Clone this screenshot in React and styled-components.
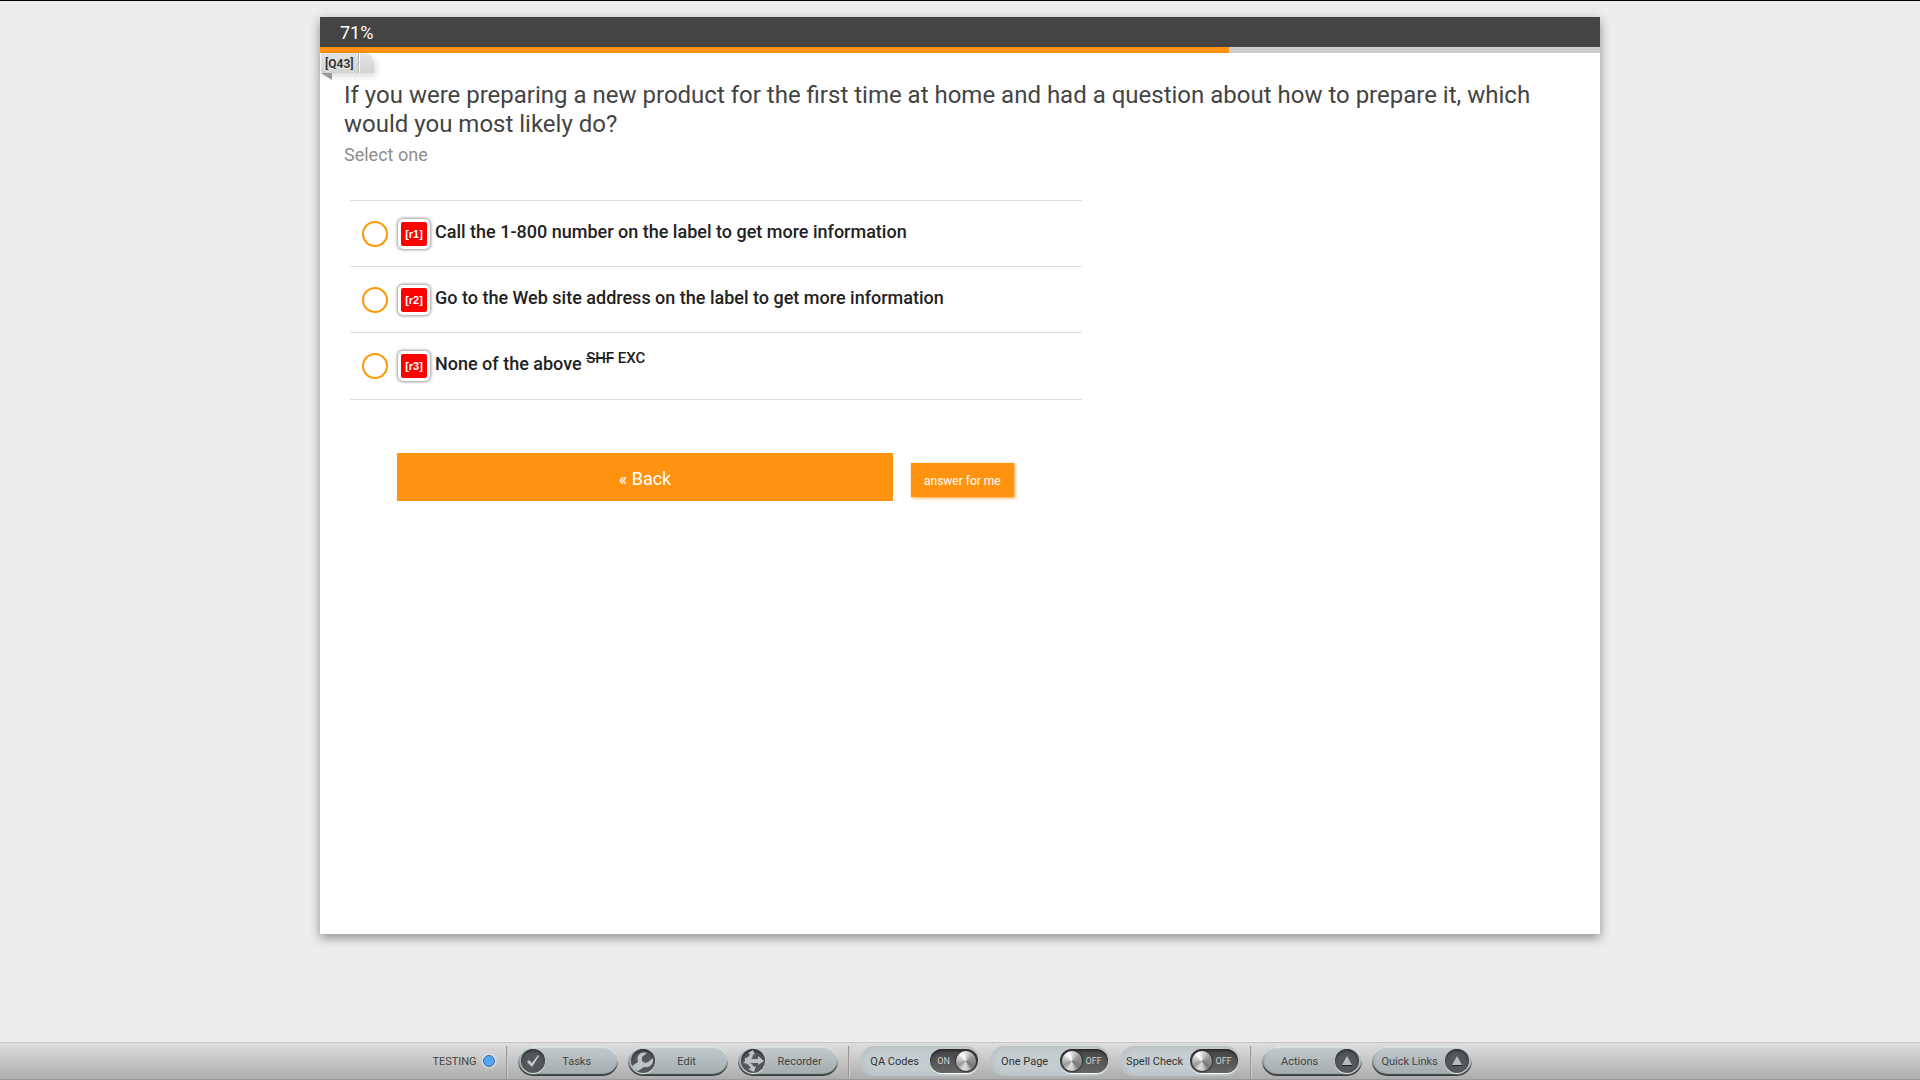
import React from "react";
import styled, { createGlobalStyle, css } from "styled-components";

// GLOBAL
const GlobalStyle = createGlobalStyle`
  * {
    box-sizing: border-box;
  }
  body {
    margin: 0;
    background: #ededed;
    color: #444;
    font-family: Roboto, "Liberation Sans", sans-serif;
  }
  button {
    font-family: inherit;
    cursor: pointer;
  }
`;

// PAGE
const Page = styled.div`
  display: flex;
  flex-direction: column;
  justify-content: space-between;
  align-items: center;
  min-height: 100vh;
  border-top: 1px solid #000;
`;
const Survey = styled.main`
  width: 100%;
  max-width: 1280px;
  min-height: calc(100vh - 163px);
  margin: 16px 0 32px;
  background: #fff;
  box-shadow: 0 4px 10px rgba(0, 0, 0, 0.4);
`;

// PROGRESS
const ProgressHeader = styled.header`
  height: 30px;
  padding-left: 20px;
  background: #444;
  color: #fff;
  font-size: 18px;
  line-height: 32px;
`;
const ProgressTrack = styled.div`
  height: 6px;
  background: #ccc;
`;
const ProgressFill = styled.div`
  height: 100%;
  background: #ff930f;
`;

// QUESTION
const Tag = styled.div`
  position: absolute;
  top: 0;
  left: 1px;
  display: flex;
  height: 20px;
  border-radius: 0 10px 0 0;
  background: linear-gradient(#e2e4e4, #d2d4d4);
  box-shadow: 2px 3px 6px rgba(0, 0, 0, 0.15);
  color: #333;
  font-size: 12px;
  font-weight: 700;
  line-height: 22px;
  text-shadow: 0 1px 0 #fff;

  &::after {
    content: "";
    position: absolute;
    top: 20px;
    left: 0;
    border-top: 7px solid #999;
    border-left: 11px solid transparent;
  }
`;
const TagName = styled.span`
  padding: 0 4px;
  border-right: 1px solid #b4b6b6;
`;
const TagEnd = styled.span`
  width: 15px;
  border-left: 1px solid #fff;
`;
const Question = styled.form`
  position: relative;
  padding: 28px 24px;
`;
const Title = styled.h1`
  margin: 0;
  font-size: 24px;
  font-weight: 400;
  line-height: 29px;
`;
const Hint = styled.p`
  margin: 4px 0 0;
  color: #8e8e8e;
  font-size: 18px;
  line-height: 24px;
`;
const Answers = styled.div`
  width: 60%;
  max-width: 732px;
  margin: 33px 0 0 6px;
  border-top: 1px solid #ddd;
`;
const Answer = styled.label`
  display: flex;
  align-items: center;
  height: 66px;
  padding: 0 0 2px 12px;
  border-bottom: 1px solid #ddd;
  color: #222;
  font-size: 18px;
  font-weight: 500;
  cursor: pointer;

  &:last-child {
    height: 67px;
    padding-bottom: 3px;
  }
`;
const Radio = styled.input`
  appearance: none;
  flex: none;
  width: 26px;
  height: 26px;
  margin: 2px 10px 0 0;
  border: 2px solid #ff9800;
  border-radius: 50%;

  &:checked {
    background: #ff9800;
    box-shadow: inset 0 0 0 4px #fff;
  }
`;
const Code = styled.span`
  flex: none;
  width: 32px;
  margin: 2px 5px 0 0;
  padding: 4px 0;
  border: 3px solid #fff;
  border-radius: 5px;
  background: #f00;
  box-shadow: 0 0 3px 1px rgba(0, 0, 0, 0.4);
  color: #fff;
  font-family: "Liberation Sans", sans-serif;
  font-size: 11px;
  font-weight: 700;
  line-height: 16px;
  text-align: center;
`;
const AnswerText = styled.span`
  line-height: 24px;
  padding-bottom: 2px;

  sup {
    font-size: 15px;
    line-height: 0;
  }
`;
const Buttons = styled.div`
  display: flex;
  align-items: center;
  gap: 18px;
  margin: 53px 0 0 53px;
`;
const Button = styled.button`
  border: 0;
  background: #ff930f;
  color: #fff;
  ${({ $small }) =>
    $small
      ? css`
          height: 34px;
          margin-top: 6px;
          padding: 1px 13px 0;
          box-shadow: 1px 1px 3px rgba(255, 147, 15, 0.9);
          font-size: 12px;
        `
      : css`
          width: 496px;
          height: 48px;
          padding: 2px 0 0;
          font-size: 18px;
        `}
`;

// TOOLBAR
const Toolbar = styled.footer`
  position: sticky;
  bottom: 0;
  display: flex;
  justify-content: center;
  width: 100%;
  height: 38px;
  padding: 3px 6px 3px 0;
  border-top: 1px solid #c6c6c6;
  border-bottom: 1px solid #999;
  background: linear-gradient(#dedede, #adadad);
  font-size: 11px;
  white-space: nowrap;
`;
const Group = styled.div`
  display: flex;
  gap: 10px;
  height: 30px;
  padding: 0 10px;
`;
const Divider = styled.div`
  width: 2px;
  height: 32px;
  border-left: 1px solid #999;
  border-right: 1px solid #ccc;
`;
const Status = styled.div`
  display: flex;
  align-items: center;
  gap: 6px;
  padding-right: 11px;
  color: #444;
`;
const Dot = styled.span`
  width: 12px;
  height: 12px;
  border: 1px solid #34699c;
  border-radius: 50%;
  background: #55a5f7;
  box-shadow: 0 0 2px 1px #eee;
`;
const Pill = styled.button`
  display: flex;
  align-items: center;
  width: 100px;
  height: 30px;
  padding: 0 3px;
  border: 0;
  border-radius: 15px;
  background: linear-gradient(#c4cbce, #a2aaad);
  box-shadow: inset 0 2px 1px #dbe3e7, inset 0 -2px 1px #3c4042,
    inset 2px 0 2px #929a9d;
  color: #444;
  font-size: 11px;
`;
const PillText = styled.span`
  flex: 1;
  padding-right: ${({ $afterIcon }) => ($afterIcon ? "6px" : "0")};
  text-align: center;
`;
const Round = styled.span`
  flex: none;
  width: 24px;
  height: 24px;
  border-radius: 50%;
  background: #55585a;
  box-shadow: inset 0 2px 3px #303233, 0 1px 1px #e7edf0;

  svg {
    display: block;
  }
`;
const SwitchLabel = styled.label`
  display: flex;
  align-items: center;
  width: 120px;
  height: 30px;
  padding-right: 2px;
  border-radius: 15px;
  background: #c6cdd0;
  box-shadow: inset 0 0 6px 2px #b5bfc4;
  color: #333;
  cursor: pointer;
`;
const SwitchName = styled.span`
  flex: 1;
  text-align: center;
`;
const SwitchTrack = styled.span`
  display: flex;
  flex-direction: ${({ $on }) => ($on ? "row" : "row-reverse")};
  align-items: center;
  width: 48px;
  height: 24px;
  padding: 0 2px;
  border-radius: 12px;
  background: linear-gradient(#444, #666);
  box-shadow: inset 0 2px 2px #2c2c2c, 0 1px 1px #fff;
  color: #d0d0d0;
  font-size: 9px;
`;
const SwitchState = styled.span`
  flex: 1;
  text-align: center;
`;
const SwitchInput = styled.input`
  appearance: none;
  width: 20px;
  height: 20px;
  margin: 0;
  border-radius: 50%;
  background: conic-gradient(#ddd, #999 60deg, #888 100deg, #777 135deg, #ccc 170deg, #ddd 200deg, #999 240deg, #ccc 290deg, #fff 330deg, #ddd);
  box-shadow: 0 0 1px 1px #333;
  cursor: pointer;
`;

// ICONS
const icons = {
  check: <path d="M6 13l2-2 3 3 6-8 1 1-7 11z" fill="#c4c9cb" />,
  wrench: (
    <path
      d="M1 17l6-4C5 7 9 2 16 4l-5 4v4l3 2 3-1 5-4c1 6-3 10-9 9l-6 4c-3-1-5-2-6-5z"
      fill="#bcc3c6"
    />
  ),
  recorder: (
    <path
      d="M4 9c3 0 4-2 5-4L7 4l5-3 2 5-2-1c0 3-1 4-2 5h7V7l6 5-6 4v-2H9c2 1 3 2 4 4l2-1-2 6-6-3 3-1c-2-3-4-5-8-5l2-2z"
      fill="#bcc3c6"
    />
  ),
  up: (
    <>
      <path d="M7 16h10v1H7z" fill="#222" />
      <path d="M12 7l5 9H7z" fill="#b5bcbf" />
    </>
  )
};

const RoundIcon = ({ name }) => (
  <Round>
    <svg width="24" height="24" viewBox="0 0 24 24" aria-hidden="true">
      {icons[name]}
    </svg>
  </Round>
);

const answers = [
  { id: "r1", text: "Call the 1-800 number on the label to get more information" },
  { id: "r2", text: "Go to the Web site address on the label to get more information" },
  { id: "r3", text: "None of the above", flags: true }
];

// COMPONENT
class App extends React.Component {
  state = {
    percent: 71,
    answer: null,
    switches: { "QA Codes": true, "One Page": false, "Spell Check": false }
  };

  toggle = name => {
    this.setState(({ switches }) => ({
      switches: { ...switches, [name]: !switches[name] }
    }));
  };

  render() {
    const { percent, answer, switches } = this.state;
    return (
      <>
        <GlobalStyle />
        <Page>
          <Survey>
            <ProgressHeader>{percent}%</ProgressHeader>
            <ProgressTrack>
              <ProgressFill style={{ width: `${percent}%` }} />
            </ProgressTrack>
            <Question>
              <Tag>
                <TagName>[Q43]</TagName>
                <TagEnd />
              </Tag>
              <Title>
                If you were preparing a new product for the first time at home
                and had a question about how to prepare it, which would you most
                likely do?
              </Title>
              <Hint>Select one</Hint>
              <Answers>
                {answers.map(({ id, text, flags }) => (
                  <Answer key={id}>
                    <Radio
                      type="radio"
                      name="q43"
                      checked={answer === id}
                      onChange={() => this.setState({ answer: id })}
                    />
                    <Code>[{id}]</Code>
                    <AnswerText>
                      {text}
                      {flags && (
                        <>
                          {" "}
                          <sup>
                            <s>SHF</s> EXC
                          </sup>
                        </>
                      )}
                    </AnswerText>
                  </Answer>
                ))}
              </Answers>
              <Buttons>
                <Button type="button">« Back</Button>
                <Button
                  type="button"
                  $small
                  onClick={() => this.setState({ answer: "r1" })}
                >
                  answer for me
                </Button>
              </Buttons>
            </Question>
          </Survey>
          <Toolbar>
            <Status>
              TESTING
              <Dot />
            </Status>
            <Divider />
            <Group>
              <Pill>
                <RoundIcon name="check" />
                <PillText $afterIcon>Tasks</PillText>
              </Pill>
              <Pill>
                <RoundIcon name="wrench" />
                <PillText $afterIcon>Edit</PillText>
              </Pill>
              <Pill>
                <RoundIcon name="recorder" />
                <PillText>Recorder</PillText>
              </Pill>
            </Group>
            <Divider />
            <Group>
              {Object.keys(switches).map(name => (
                <SwitchLabel key={name}>
                  <SwitchName>{name}</SwitchName>
                  <SwitchTrack $on={switches[name]}>
                    <SwitchState>{switches[name] ? "ON" : "OFF"}</SwitchState>
                    <SwitchInput
                      type="checkbox"
                      checked={switches[name]}
                      onChange={() => this.toggle(name)}
                    />
                  </SwitchTrack>
                </SwitchLabel>
              ))}
            </Group>
            <Divider />
            <Group>
              <Pill>
                <PillText>Actions</PillText>
                <RoundIcon name="up" />
              </Pill>
              <Pill>
                <PillText>Quick Links</PillText>
                <RoundIcon name="up" />
              </Pill>
            </Group>
          </Toolbar>
        </Page>
      </>
    );
  }
}

export default App;
